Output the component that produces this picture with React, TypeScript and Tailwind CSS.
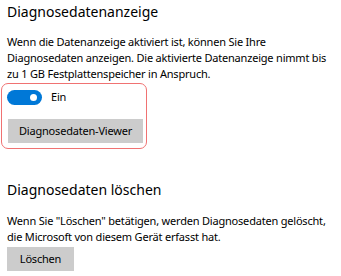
export default function App() {
  return (
    <div
      className="w-[341px] h-[276px] overflow-hidden bg-white px-[7px] text-black whitespace-nowrap"
      style={{ fontFamily: '"Noto Sans", "Open Sans", sans-serif' }}
    >
      {/* Diagnosedatenanzeige */}
      <h2 className="pt-[2px] text-[14px] leading-[20px] font-normal">Diagnosedatenanzeige</h2>
      <p className="mt-[12px] text-[11px] leading-[16px] tracking-[-0.2px]">
        Wenn die Datenanzeige aktiviert ist, können Sie Ihre
        <br />
        Diagnosedaten anzeigen. Die aktivierte Datenanzeige nimmt bis
        <br />
        zu 1 GB Festplattenspeicher in Anspruch.
      </p>
      <div className="mt-[1px] -ml-[6px] w-[146px] rounded-[7px] border border-[#f07272] pl-[5px] pt-[5px] pb-[5px]">
        <div className="flex items-center gap-[9px]">
          <div className="flex h-[15px] w-[35px] items-center justify-end rounded-full bg-[#0078d7] pr-[5px]">
            <div className="h-[7px] w-[7px] rounded-full bg-white" />
          </div>
          <span className="text-[11px] leading-[16px] tracking-[-0.2px]">Ein</span>
        </div>
        <button className="mt-[14px] ml-[1px] h-[24px] w-[135px] bg-[#cccccc] text-[11px] leading-[16px] tracking-[-0.2px] text-black">
          Diagnosedaten-Viewer
        </button>
      </div>

      {/* Diagnosedaten löschen */}
      <h2 className="mt-[31px] text-[14px] leading-[20px] font-normal">Diagnosedaten löschen</h2>
      <p className="mt-[13px] text-[11px] leading-[16px] tracking-[-0.2px]">
        Wenn Sie "Löschen" betätigen, werden Diagnosedaten gelöscht,
        <br />
        die Microsoft von diesem Gerät erfasst hat.
      </p>
      <button className="mt-[2px] h-[24px] w-[67px] bg-[#cccccc] text-[11px] leading-[16px] tracking-[-0.2px] text-black">
        Löschen
      </button>
    </div>
  );
}
